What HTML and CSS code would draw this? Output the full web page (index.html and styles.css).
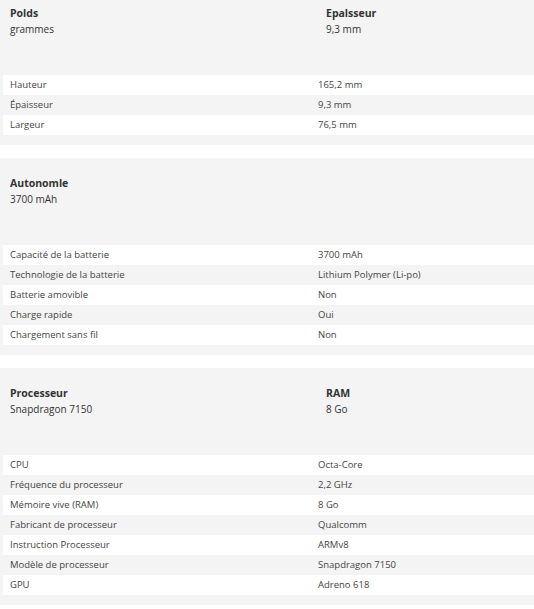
FILE: index.html
```html
<!DOCTYPE html>
<html lang="fr">
<head>
<meta charset="utf-8">
<link rel="stylesheet" href="styles.css">
</head>
<body>
<div class="page">
  <section class="spec">
    <div class="summary">
      <div class="item"><div class="title">Polds</div><div class="value">grammes</div></div>
      <div class="item"><div class="title">Epalsseur</div><div class="value">9,3 mm</div></div>
    </div>
    <div class="table">
      <div class="row"><span>Hauteur</span><span>165,2 mm</span></div>
      <div class="row"><span>Épaisseur</span><span>9,3 mm</span></div>
      <div class="row"><span>Largeur</span><span>76,5 mm</span></div>
    </div>
  </section>
  <section class="spec">
    <div class="summary">
      <div class="item"><div class="title">Autonomle</div><div class="value">3700 mAh</div></div>
    </div>
    <div class="table">
      <div class="row"><span>Capacité de la batterie</span><span>3700 mAh</span></div>
      <div class="row"><span>Technologie de la batterie</span><span>Lithium Polymer (Li-po)</span></div>
      <div class="row"><span>Batterie amovible</span><span>Non</span></div>
      <div class="row"><span>Charge rapide</span><span>Oui</span></div>
      <div class="row"><span>Chargement sans fil</span><span>Non</span></div>
    </div>
  </section>
  <section class="spec">
    <div class="summary">
      <div class="item"><div class="title">Processeur</div><div class="value">Snapdragon 7150</div></div>
      <div class="item"><div class="title">RAM</div><div class="value">8 Go</div></div>
    </div>
    <div class="table">
      <div class="row"><span>CPU</span><span>Octa-Core</span></div>
      <div class="row"><span>Fréquence du processeur</span><span>2,2 GHz</span></div>
      <div class="row"><span>Mémoire vive (RAM)</span><span>8 Go</span></div>
      <div class="row"><span>Fabricant de processeur</span><span>Qualcomm</span></div>
      <div class="row"><span>Instruction Processeur</span><span>ARMv8</span></div>
      <div class="row"><span>Modèle de processeur</span><span>Snapdragon 7150</span></div>
      <div class="row"><span>GPU</span><span>Adreno 618</span></div>
    </div>
  </section>
</div>
</body>
</html>
```
FILE: styles.css
```css
html, body {
  margin: 0;
  padding: 0;
  background: #ffffff;
  font-family: "Open Sans", "DejaVu Sans", sans-serif;
  color: #333333;
}
.page {
  margin-top: -12px;
}
.spec {
  background: #f4f4f4;
  padding: 17px 0 10px 0;
  margin-bottom: 13px;
}
.summary {
  display: grid;
  grid-template-columns: 316px 1fr;
  padding-left: 10px;
  margin-bottom: 38px;
}
.title {
  font-weight: 700;
  font-size: 10.5px;
  line-height: 16px;
  color: #333333;
}
.value {
  font-size: 10px;
  line-height: 16px;
  color: #333333;
}
.table {
  margin-left: 3px;
}
.row {
  display: grid;
  grid-template-columns: 308px 1fr;
  height: 20px;
  align-items: center;
  font-size: 9.5px;
  line-height: 14px;
  color: #444444;
}
.row span {
  padding-left: 7px;
}
.row:nth-child(odd) {
  background: #ffffff;
}
.row:nth-child(even) {
  background: #f4f4f4;
}
```
